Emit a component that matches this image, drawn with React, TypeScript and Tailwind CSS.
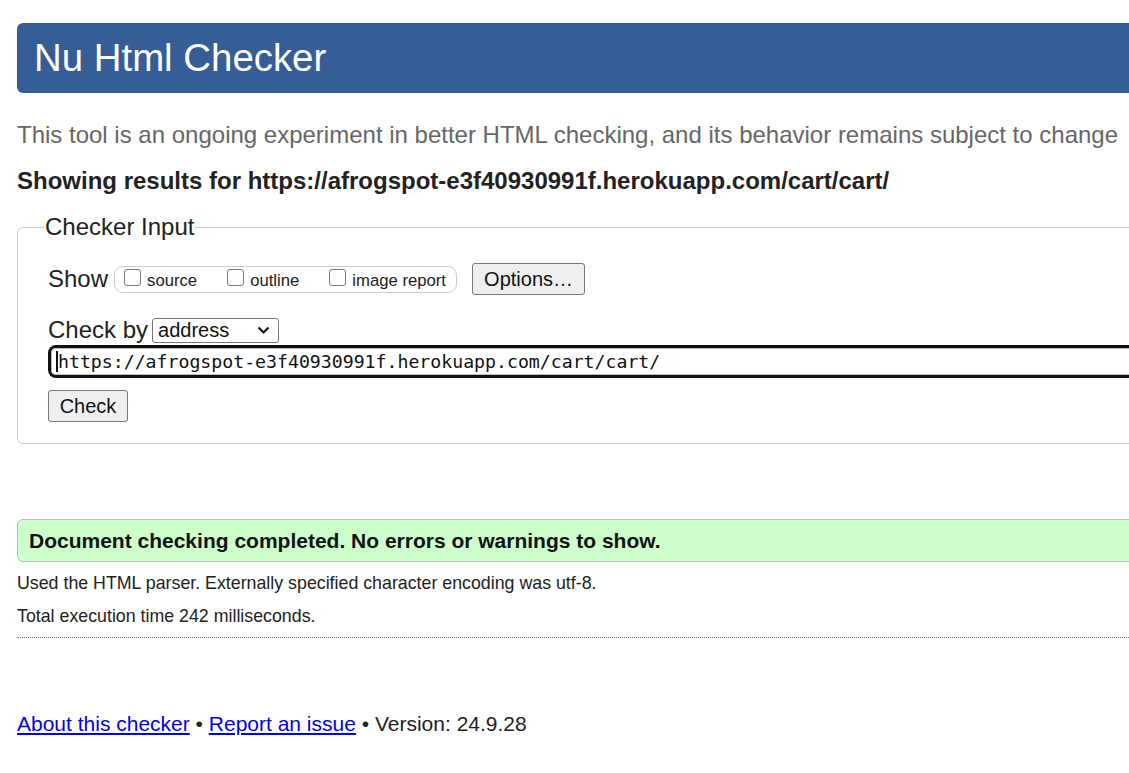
import React from "react";

export default function App() {
  const url = "https://afrogspot-e3f40930991f.herokuapp.com/cart/cart/";

  return (
    <div className="w-[1129px] h-[773px] overflow-hidden bg-white font-['Liberation_Sans',Arial,sans-serif] text-[#222]">
      <div className="ml-[17px] w-[1300px]">
        {/* Header */}
        <div className="mt-[23px] h-[70px] rounded-[6px] bg-[#365d95] pl-[17px] flex items-center">
          <h1 className="text-[38.4px] leading-none text-white">Nu Html Checker</h1>
        </div>

        <p className="mt-[28px] text-[24px] leading-[28px] text-[#666]">
          This tool is an ongoing experiment in better HTML checking, and its behavior remains subject to change
        </p>

        <p className="mt-[18px] text-[24px] leading-[28px] font-bold text-[#222]">
          Showing results for {url}
        </p>

        {/* Checker input fieldset */}
        <fieldset className="mt-[18px] h-[231px] border border-[#ccc] rounded-[6px] pl-[30px] pr-0">
          <legend className="ml-[-4px] px-[1px] text-[24px] leading-[28px]">Checker Input</legend>

          <div className="mt-[21px] flex items-center h-[34px]">
            <span className="text-[24px] leading-[28px]">Show</span>
            <div className="ml-[6px] h-[27px] w-[343px] rounded-[9px] border border-[#ccc] flex items-center pl-[9px]">
              <label className="flex items-center">
                <input type="checkbox" className="appearance-none w-[17px] h-[17px] m-0 mb-[4px] rounded-[3px] border border-[#767676] bg-white" />
                <span className="ml-[6px] mt-[4px] text-[16.7px]">source</span>
              </label>
              <label className="flex items-center ml-[30px]">
                <input type="checkbox" className="appearance-none w-[17px] h-[17px] m-0 mb-[4px] rounded-[3px] border border-[#767676] bg-white" />
                <span className="ml-[6px] mt-[4px] text-[16.7px]">outline</span>
              </label>
              <label className="flex items-center ml-[30px]">
                <input type="checkbox" className="appearance-none w-[17px] h-[17px] m-0 mb-[4px] rounded-[3px] border border-[#767676] bg-white" />
                <span className="ml-[6px] mt-[4px] text-[16.7px]">image report</span>
              </label>
            </div>
            <button className="ml-[15px] h-[32px] w-[113px] rounded-[3px] border border-[#767676] bg-[#efefef] text-[20px] text-[#111]">
              Options…
            </button>
          </div>

          <div className="mt-[21px] flex items-center h-[26px]">
            <span className="text-[24px] leading-[28px]">Check by</span>
            <div className="relative ml-[4px] h-[25px] w-[127px]">
              <select className="appearance-none h-[25px] w-[127px] rounded-[3px] border border-[#767676] bg-white pl-[5px] text-[20px] leading-none text-[#111]">
                <option>address</option>
              </select>
              <svg className="pointer-events-none absolute right-[9px] top-[8px]" width="13" height="9" viewBox="0 0 13 9">
                <path d="M1.5 1.5 L6.5 6.5 L11.5 1.5" fill="none" stroke="#111" strokeWidth="2.2" />
              </svg>
            </div>
          </div>

          <div className="mt-[2px] h-[33px] rounded-l-[8px] border-[3px] border-r-0 border-[#111] bg-white flex items-center">
            <div className="h-full w-full rounded-l-[5px] border border-r-0 border-[#bbb] flex items-center pl-[4px] pt-[2px]">
              <span className="font-['DejaVu_Sans_Mono',monospace] text-[18.2px] leading-none text-[#111]">
                <span className="border-l-[2px] border-[#111]">h</span>ttps://afrogspot-e3f40930991f.herokuapp.com/cart/cart/
              </span>
            </div>
          </div>

          <button className="mt-[12px] h-[32px] w-[80px] rounded-[3px] border border-[#767676] bg-[#efefef] text-[20px] text-[#111]">
            Check
          </button>
        </fieldset>

        {/* Result */}
        <div className="mt-[75px] h-[43px] rounded-[6px] border border-[#bbb] bg-[#ccffcc] flex items-center pl-[11px]">
          <span className="text-[21px] font-bold text-[#111]">
            Document checking completed. No errors or warnings to show.
          </span>
        </div>

        <p className="mt-[10px] text-[17.8px] leading-[22px]">
          Used the HTML parser. Externally specified character encoding was utf-8.
        </p>
        <p className="mt-[11px] text-[17.8px] leading-[22px]">
          Total execution time 242 milliseconds.
        </p>
        <div className="mt-[10px] border-t border-dotted border-[#777]" />

        <p className="mt-[74px] text-[21px] leading-[24px] text-[#222]">
          <a href="#" className="text-[#0000ee] underline">About this checker</a>
          {" • "}
          <a href="#" className="text-[#0000ee] underline">Report an issue</a>
          {" • Version: 24.9.28"}
        </p>
      </div>
    </div>
  );
}
